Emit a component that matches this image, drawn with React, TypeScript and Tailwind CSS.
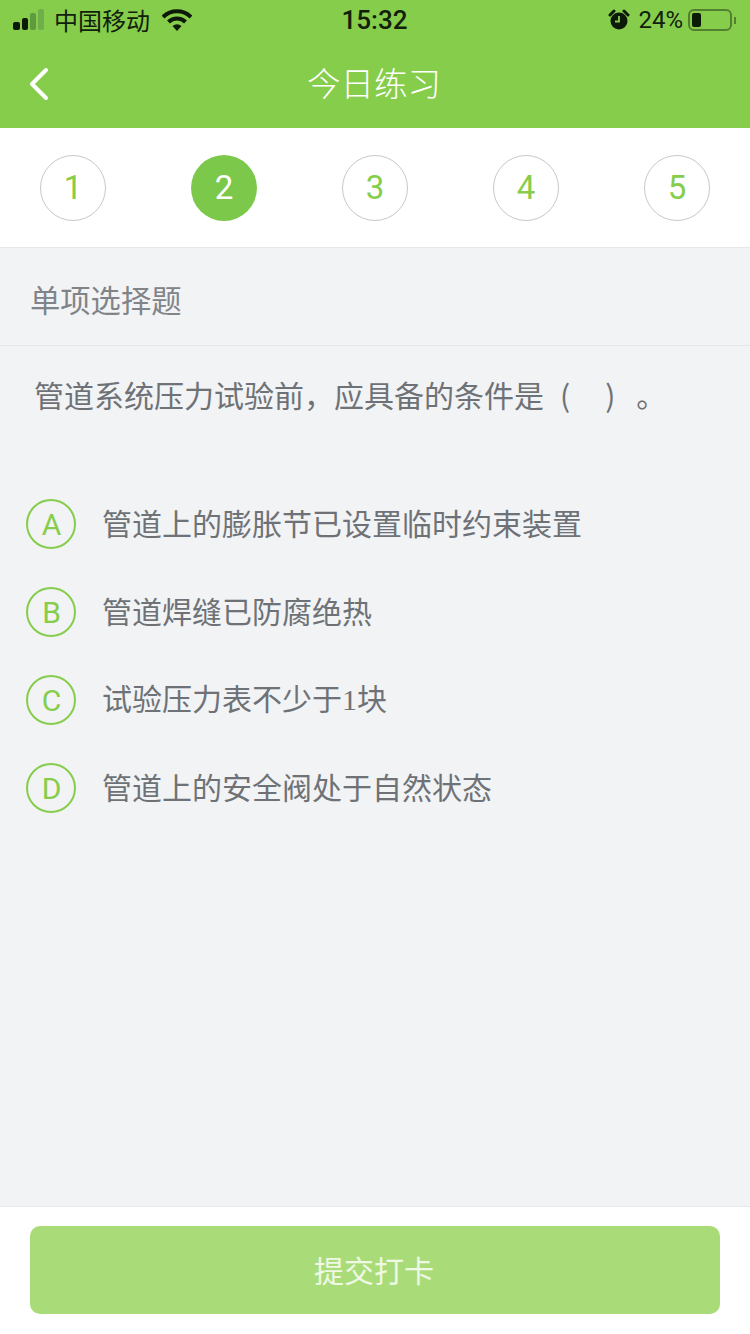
import type { ReactNode } from 'react';

const fontStack = '"Noto Sans CJK SC", sans-serif';
const steps = [1, 2, 3, 4, 5];
const options: { key: string; text: ReactNode }[] = [
  { key: 'A', text: '管道上的膨胀节已设置临时约束装置' },
  { key: 'B', text: '管道焊缝已防腐绝热' },
  {
    key: 'C',
    text: (
      <>
        试验压力表不少于<span style={{ fontFamily: '"Liberation Serif", serif' }}>1</span>块
      </>
    ),
  },
  { key: 'D', text: '管道上的安全阀处于自然状态' },
];

function StatusBar() {
  return (
    <div className="h-[40px] flex items-center justify-between pl-[13px] pr-[14px] text-[#10200a]">
      <div className="flex items-center w-[280px]">
        <div className="flex items-end gap-[2px] h-[20px]">
          <span className="w-[7px] h-[8px] rounded-[2px] bg-[#0c1a08]" />
          <span className="w-[6px] h-[12px] rounded-[2px] bg-[#0c1a08]" />
          <span className="w-[6px] h-[17px] rounded-[2px] bg-[#5f9a3e]" />
          <span className="w-[6px] h-[21px] rounded-[2px] bg-[#6fae4a]" />
        </div>
        <span className="ml-[10px] text-[24px] leading-none">中国移动</span>
        <svg className="ml-[12px]" width="30" height="23" viewBox="0 0 30 23">
          <path d="M1 8 A20 20 0 0 1 29 8" fill="none" stroke="#0c1a08" strokeWidth="4" />
          <path d="M6.500 13 A12 12 0 0 1 23.500 13" fill="none" stroke="#0c1a08" strokeWidth="4" />
          <path d="M10.500 17 L15 22 L19.500 17 A7 7 0 0 0 10.500 17 Z" fill="#0c1a08" />
        </svg>
      </div>
      <span className="text-[26px] leading-none font-medium" style={{ fontFamily: 'Roboto, sans-serif' }}>15:32</span>
      <div className="flex items-center justify-end w-[280px]">
        <svg width="22" height="22" viewBox="0 0 22 22">
          <circle cx="11" cy="12" r="8.500" fill="#0c1a08" />
          <path d="M2 6 L6 2 M20 6 L16 2" stroke="#0c1a08" strokeWidth="3" strokeLinecap="round" />
          <path d="M11 7 V12.500 H7" fill="none" stroke="#87cd4c" strokeWidth="1.800" />
        </svg>
        <span className="ml-[8px] text-[24px] leading-none" style={{ fontFamily: 'Roboto, sans-serif' }}>24%</span>
        <div className="ml-[5px] w-[44px] h-[22px] rounded-[6px] border-2 border-[#527f30] p-[2px] flex">
          <span className="w-[9px] rounded-[2px] bg-[#0c1a08]" />
        </div>
        <span className="ml-[2px] w-[2px] h-[7px] bg-[#527f30]" />
      </div>
    </div>
  );
}

export default function App() {
  return (
    <div className="w-[750px] h-[1334px] flex flex-col bg-[#f2f3f5]" style={{ fontFamily: fontStack }}>
      <header className="h-[128px] bg-[#87cd4c]">
        <StatusBar />
        <div className="h-[88px] relative flex items-center justify-center">
          <svg className="absolute left-[29px] top-[27px]" width="20" height="34" viewBox="0 0 20 34">
            <path d="M17 3 L3 17 L17 31" fill="none" stroke="#ffffff" strokeWidth="4" strokeLinecap="round" strokeLinejoin="round" />
          </svg>
          <h1 className="text-[33.500px] text-white font-light -translate-y-[2px] -translate-x-[1px]">今日练习</h1>
        </div>
      </header>

      <div className="h-[120px] bg-white border-b border-[#e8e8e8] flex items-center justify-between px-[40px]">
        {steps.map((n) =>
          n === 2 ? (
            <div key={n} className="w-[66px] h-[66px] rounded-full bg-[#7cc84a] text-white flex items-center justify-center text-[33px]" style={{ fontFamily: 'Roboto, sans-serif' }}>
              {n}
            </div>
          ) : (
            <div key={n} className="w-[66px] h-[66px] rounded-full border border-[#c8c8c8] text-[#87cd4c] flex items-center justify-center text-[33px]" style={{ fontFamily: 'Roboto, sans-serif' }}>
              {n}
            </div>
          ),
        )}
      </div>

      <div className="h-[98px] border-b border-[#e6e7e9] flex items-center pl-[30px] pt-[6px] text-[30.300px] text-[#808488]">
        单项选择题
      </div>

      <p className="mt-[25px] pl-[34px] text-[30px] leading-[46px] text-[#6e7276]">
        管道系统压力试验前，应具备的条件是<span className="ml-[16px]">(</span><span className="ml-[35px]">)</span><span className="ml-[21px]">。</span>
      </p>

      <div className="mt-[82px] pl-[26px] flex flex-col gap-[38px]">
        {options.map((o) => (
          <div key={o.key} className="flex items-center h-[50px]">
            <div className="w-[50px] h-[50px] rounded-full border-2 border-[#87cd4c] text-[#87cd4c] flex items-center justify-center text-[30px] pl-[1px]" style={{ fontFamily: 'Roboto, sans-serif' }}>
              {o.key}
            </div>
            <span className="ml-[26px] text-[30px] text-[#6e7276] -translate-y-[2px]">{o.text}</span>
          </div>
        ))}
      </div>

      <footer className="mt-auto h-[128px] bg-white border-t border-[#e8e8e8] px-[30px] pt-[19px]">
        <button className="w-full h-[88px] rounded-[10px] bg-[#a9dc78] text-white/80 text-[30px]">
          <span className="relative right-[1px] bottom-[1px]">提交打卡</span>
        </button>
      </footer>
    </div>
  );
}
